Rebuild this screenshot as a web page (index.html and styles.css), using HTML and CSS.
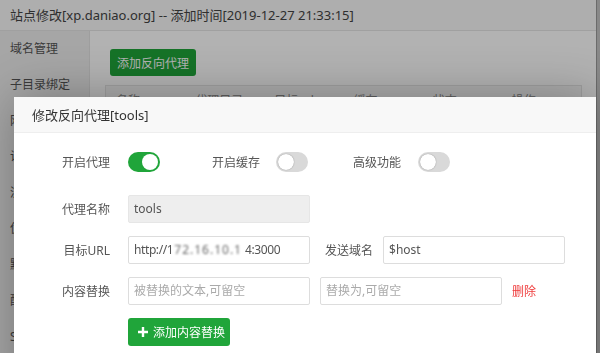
FILE: index.html
```html
<!DOCTYPE html>
<html lang="zh-CN">
<head>
  <meta charset="UTF-8" />
  <title>站点修改</title>
  <link rel="stylesheet" href="styles.css">
</head>
<body>

  <!-- Fenêtre de fond : site -->
  <div class="layer">
    <div class="layer-title">站点修改[xp.daniao.org] -- 添加时间[2019-12-27 21:33:15]</div>
    <div class="layer-body">
      <ul class="side">
        <li>域名管理</li>
        <li>子目录绑定</li>
        <li>网站目录</li>
        <li>访问限制</li>
        <li>流量限制</li>
        <li>伪静态</li>
        <li>默认文档</li>
        <li>配置文件</li>
        <li>SSL</li>
      </ul>
      <div class="main">
        <button class="btn-green btn-add">添加反向代理</button>
        <div class="table-head">
          <span>名称</span><span>代理目录</span><span>目标url</span><span>缓存</span><span>状态</span><span>操作</span>
        </div>
      </div>
    </div>
  </div>

  <div class="shade"></div>

  <!-- Boîte de dialogue -->
  <div class="dialog">
    <div class="dialog-title">修改反向代理[tools]</div>
    <div class="dialog-body">

      <div class="row row-switch">
        <span class="label">开启代理</span>
        <span class="switch on"></span>
        <span class="label-inline label-cache">开启缓存</span>
        <span class="switch"></span>
        <span class="label-inline label-adv">高级功能</span>
        <span class="switch"></span>
      </div>

      <div class="row">
        <span class="label">代理名称</span>
        <div class="input disabled">tools</div>
      </div>

      <div class="row">
        <span class="label">目标URL</span>
        <div class="input input-url">http://1<span class="mask">72.16.10.1</span>4:3000</div>
        <span class="label-inline label-host">发送域名</span>
        <div class="input">$host</div>
      </div>

      <div class="row">
        <span class="label">内容替换</span>
        <div class="input placeholder">被替换的文本,可留空</div>
        <div class="input placeholder input-to">替换为,可留空</div>
        <a class="del">删除</a>
      </div>

      <div class="row">
        <span class="label"></span>
        <button class="btn-green btn-sub">
          <svg viewBox="0 0 10 10" width="10" height="10" aria-hidden="true">
            <path d="M3.8 0h2.4v3.8H10v2.4H6.2V10H3.8V6.2H0V3.8h3.8z" fill="#fff"/>
          </svg>
          添加内容替换
        </button>
      </div>

    </div>
  </div>

</body>
</html>
```

FILE: styles.css
```css
/* Base */
html, body {
  margin: 0; padding: 0;
  height: 100%;
  overflow: hidden;
  background: #c4c4c4;
  font-family: 'Noto Sans', 'Noto Sans CJK SC', sans-serif;
  color: #333;
}

/* Fenêtre du site en arrière-plan */
.layer {
  width: 597px;
  height: 100%;
  background: #fff;
  border-right: 1px solid #9a9a9a;
  box-sizing: border-box;
}

.layer-title {
  height: 31px;
  line-height: 30px;
  padding-left: 10px;
  font-size: 13px;
  color: #444;
  background: #f9f9f9;
  border-bottom: 1px solid #e6e6e6;
  box-sizing: border-box;
}

.layer-body {
  display: flex;
  height: calc(100% - 31px);
}

.side {
  list-style: none;
  margin: 0;
  padding: 0;
  width: 90px;
  background: #eeeeee;
  border-right: 1px solid #e2e2e2;
  box-sizing: border-box;
}
.side li {
  height: 36px;
  line-height: 36px;
  padding-left: 10px;
  font-size: 12px;
  color: #555;
}

.main {
  flex: 1;
  padding: 18px 14px 0 20px;
}

.btn-green {
  display: inline-flex;
  align-items: center;
  border: none;
  border-radius: 3px;
  background: #20a53a;
  color: #fff;
  font-family: inherit;
  font-size: 12px;
  cursor: pointer;
}

.btn-add {
  height: 27px;
  padding: 0 7px;
}

.table-head {
  display: flex;
  margin-top: 9px;
  margin-left: -5px;
  height: 30px;
  line-height: 30px;
  background: #f6f6f6;
  border: 1px solid #e4e4e4;
  font-size: 12px;
  color: #888;
}
.table-head span { flex: 1; padding-left: 10px; }

/* Voile */
.shade {
  position: fixed;
  top: 0; left: 0; right: 0; bottom: 0;
  background: rgba(0, 0, 0, 0.3);
}

/* Dialogue */
.dialog {
  position: absolute;
  left: 14px;
  top: 97px;
  width: 582px;
  height: 300px;
  background: #fff;
  box-shadow: 1px 1px 50px rgba(0, 0, 0, 0.3);
  border-radius: 2px;
}

.dialog-title {
  height: 36px;
  line-height: 36px;
  padding-left: 18px;
  font-size: 13px;
  color: #333;
  background: #f8f8f8;
  border-bottom: 1px solid #eee;
  box-sizing: border-box;
}

.dialog-body {
  padding: 15px 0 0 16px;
}

.row {
  display: flex;
  align-items: center;
  height: 28px;
  margin-bottom: 13px;
  font-size: 12px;
}
.row-switch { margin-bottom: 19px; }

.label {
  width: 80px;
  margin-right: 18px;
  text-align: right;
  color: #555;
}

.label-inline { color: #555; }
.label-cache { margin-left: 52px; margin-right: 16px; }
.label-adv { margin-left: 45px; margin-right: 17px; }
.label-host { margin-left: 15px; margin-right: 10px; }

/* Interrupteurs */
.switch {
  position: relative;
  width: 32px;
  height: 20px;
  border-radius: 10px;
  background: #d9d9d9;
}
.switch::after {
  content: '';
  position: absolute;
  top: 2px; left: 2px;
  width: 16px;
  height: 16px;
  border-radius: 50%;
  background: #fff;
  box-shadow: 0 0 1px rgba(0,0,0,0.5);
}
.switch.on { background: #20a53a; }
.switch.on::after { left: 14px; box-shadow: none; }

/* Champs */
.input {
  width: 182px;
  height: 28px;
  line-height: 26px;
  padding: 0 5px;
  border: 1px solid #ddd;
  border-radius: 2px;
  box-sizing: border-box;
  color: #555;
  white-space: nowrap;
  overflow: hidden;
}
.input.disabled { background: #eee; border-color: #e6e6e6; }
.input.placeholder { color: #aaa; }
.input-to { margin-left: 10px; }

.input-url { letter-spacing: -0.4px; }

.mask {
  display: inline-block;
  padding: 0 3px 0 1px;
  color: #666;
  letter-spacing: 1px;
  filter: blur(1.1px);
}

.del {
  margin-left: 10px;
  color: #ef3b3b;
  cursor: pointer;
}

.btn-sub {
  height: 28px;
  padding: 0 5px 0 10px;
  gap: 5px;
}
```
